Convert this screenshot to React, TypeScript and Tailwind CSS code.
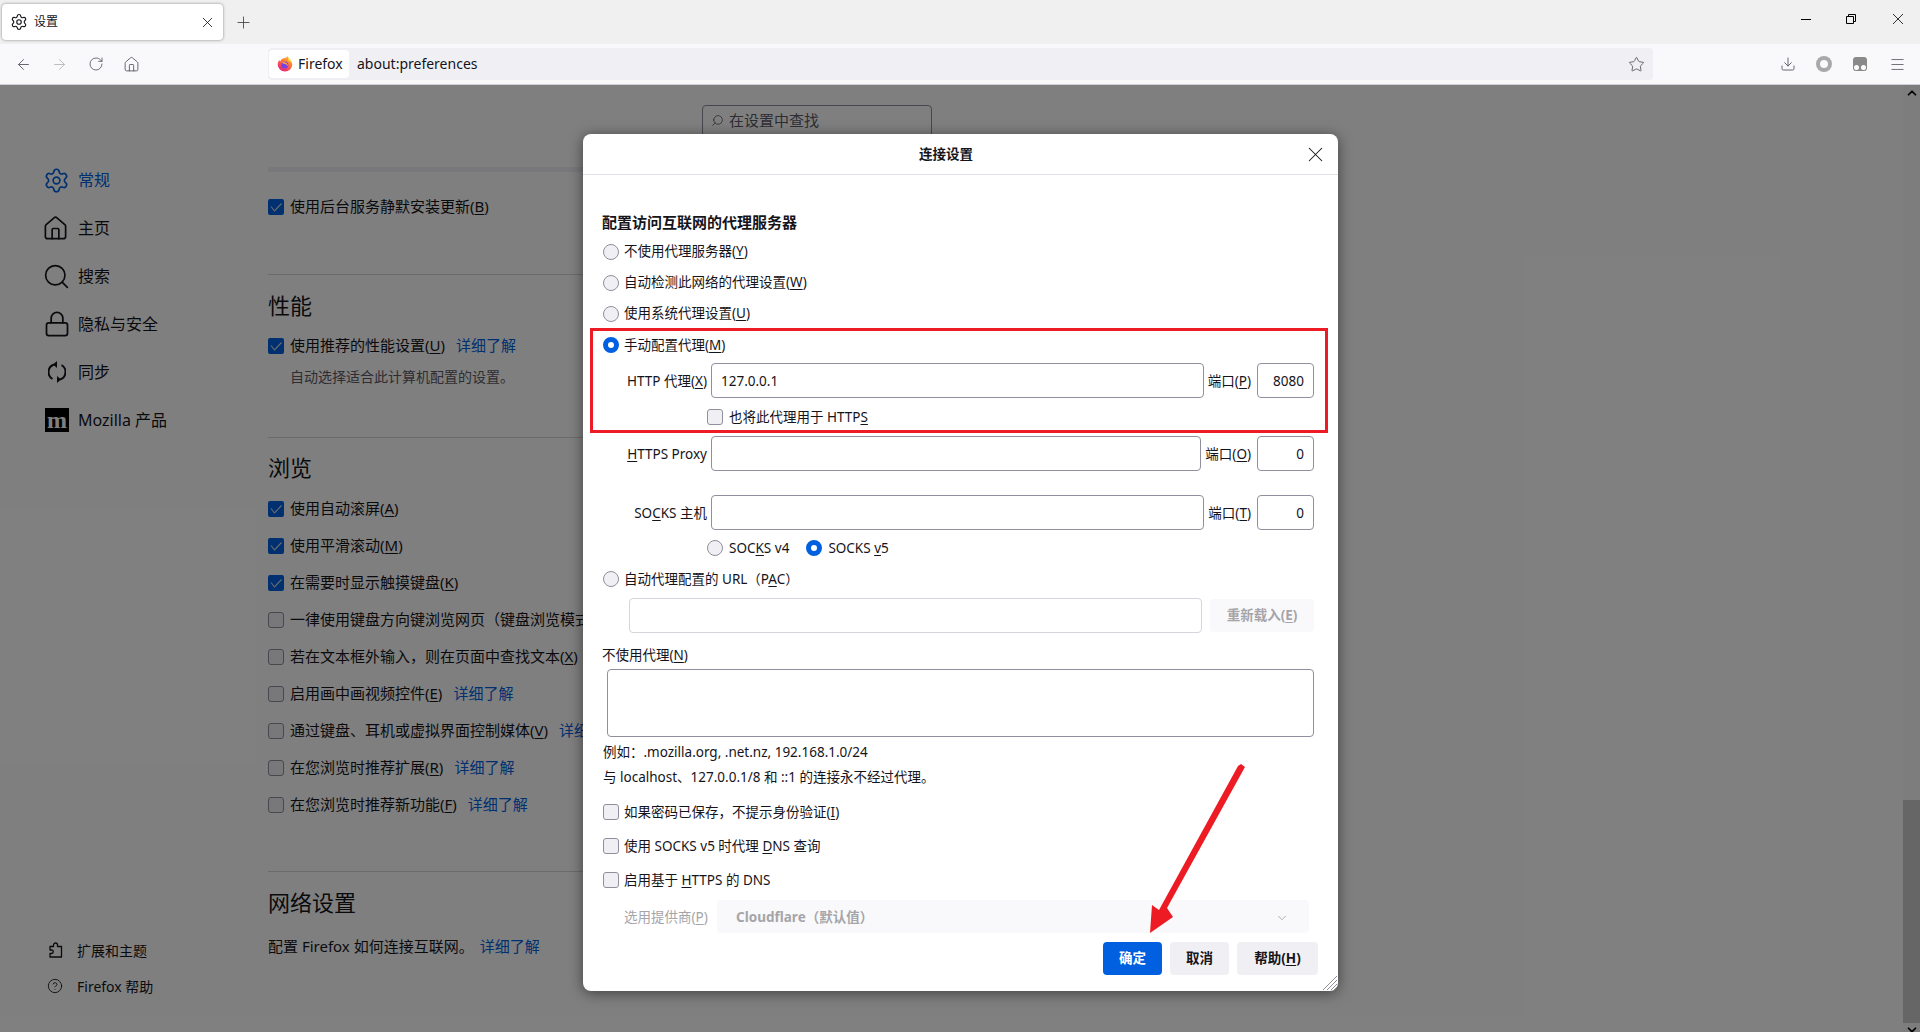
import React from "react";
import { Settings, Search, X, Plus, ArrowLeft, ArrowRight, RotateCw, Star, Download, Menu, ChevronDown, ChevronUp, Lock, CircleHelp, House } from "lucide-react";

const K = ({ children }: { children: React.ReactNode }) => <span className="underline underline-offset-2">{children}</span>;

const Box = ({ on }: { on?: boolean }) =>
  on ? (
    <span className="flex h-4 w-4 shrink-0 items-center justify-center rounded-[2px] bg-[#0060df]">
      <svg viewBox="0 0 16 16" className="h-4 w-4" fill="none" stroke="#d8d8e0" strokeWidth="1.1"><path d="M3 7.5 L6.5 12 L13.5 4.5" /></svg>
    </span>
  ) : (
    <span className="block h-4 w-4 shrink-0 rounded-[3px] border border-[#8f8f9d] bg-[#f0f0f4]" />
  );

const Radio = ({ on }: { on?: boolean }) =>
  on ? (
    <span className="block h-4 w-4 shrink-0 rounded-full border-[5px] border-[#0060df] bg-white" />
  ) : (
    <span className="block h-4 w-4 shrink-0 rounded-full border border-[#8f8f9d] bg-[#f0f0f4]" />
  );

const Link = ({ ml = "ml-[11px]" }: { ml?: string }) => <span className={ml + " text-[#0060df]"}>详细了解</span>;

const PrefRow = ({ on, children }: { on?: boolean; children: React.ReactNode }) => (
  <div className="flex h-[37px] items-center whitespace-nowrap text-[15px]">
    <Box on={on} />
    <span className="ml-[6px]">{children}</span>
  </div>
);

const SideItem = ({ icon, children, active }: { icon: React.ReactNode; children: React.ReactNode; active?: boolean }) => (
  <div className={"flex h-[48px] items-center text-[16px] " + (active ? "text-[#0060df]" : "")}>
    <span className="flex w-[33px] shrink-0 items-center">{icon}</span>
    <span>{children}</span>
  </div>
);

const Input = ({ w, value, right, disabled }: { w: string; value?: string; right?: boolean; disabled?: boolean }) => (
  <div className={`flex ${w} h-[35px] shrink-0 items-center rounded-[4px] border bg-white px-[9px] pt-[2px] ${disabled ? "border-[#d5d5dc]" : "border-[#8f8f9d]"} ${right ? "justify-end" : ""}`}>
    {value}
  </div>
);

const DRadio = ({ on, h, children }: { on?: boolean; h: string; children: React.ReactNode }) => (
  <div className={`flex ${h} items-center`}>
    <Radio on={on} />
    <span className="ml-[5px]">{children}</span>
  </div>
);

const DCheck = ({ children }: { children: React.ReactNode }) => (
  <div className="flex h-[34px] items-center">
    <Box />
    <span className="ml-[5px]">{children}</span>
  </div>
);

const ProxyRow = ({ label, inputW, port, portValue, value, cls = "" }: { label: React.ReactNode; inputW: string; port: React.ReactNode; portValue: string; value?: string; cls?: string }) => (
  <div className={"flex items-center " + cls}>
    <span className="mr-[4px] w-[104px] shrink-0 whitespace-nowrap pt-[2px] text-right">{label}</span>
    <Input w={inputW} value={value} />
    <span className="flex-1 whitespace-nowrap pr-[6px] pt-[2px] text-right">{port}</span>
    <Input w="w-[57px]" value={portValue} right />
  </div>
);

const FirefoxLogo = () => (
  <svg viewBox="0 0 16 16" className="h-4 w-4 shrink-0">
    <defs>
      <linearGradient id="ff" x1="0.8" y1="0" x2="0.2" y2="1">
        <stop offset="0" stopColor="#ffbd2e" />
        <stop offset="0.45" stopColor="#ff7139" />
        <stop offset="1" stopColor="#e31587" />
      </linearGradient>
    </defs>
    <path d="M8 15.5A7.3 7.3 0 0 1 .7 8.4C.7 6.4 1.5 5 2.6 4c0 .8.3 1.3.7 1.5C3.700 3.500 5.500 2.500 7 2.300 8.500 2 10 1.300 10.800.3c.6 1.200.6 2 .3 2.700 1.900 1 4.200 2.900 4.200 5.400A7.300 7.300 0 0 1 8 15.500Z" fill="url(#ff)" />
    <path d="M11 1c1.500 1.500 3 3 4 6-1-1-2.500-2-4-2.500Z" fill="#ffd93b" />
    <circle cx="7.800" cy="9" r="3.500" fill="#7542e5" />
    <path d="M5 6.300c1.600-.6 3.500-.4 4.700.6 1.300 1.100 1.300 2.700.5 3.600.1-1.500-1-2.500-2.500-2.500-1.300 0-2.300-.6-2.700-1.700Z" fill="#ff9a3d" />
  </svg>
);

const SyncIcon = () => (
  <svg viewBox="3 0 18 24" className="ml-[3px] h-[24px] w-[18px]" fill="none" stroke="currentColor" strokeWidth="2">
    <path d="M9 4.500A8 8 0 0 0 7.500 19" />
    <path d="M15 19.500A8 8 0 0 0 16.500 5" />
    <path d="M12 1 L8 4.500 L12 8Z" fill="currentColor" stroke="none" />
    <path d="M12 23 L16 19.500 L12 16Z" fill="currentColor" stroke="none" />
  </svg>
);

const AddonIcon = () => (
  <svg viewBox="0 0 16 16" className="ml-[3px] h-4 w-4" fill="none" stroke="currentColor" strokeWidth="1.3" strokeLinejoin="round">
    <path d="M2 4.500h3.500V3a2 2 0 0 1 4 0v1.500H13.500v10.500H2v-3.500h1.500a1.700 1.700 0 0 0 0-3.500H2Z" />
  </svg>
);

export default function App() {
  return (
    <div className="relative flex h-[1032px] w-[1920px] flex-col overflow-hidden bg-white font-['Noto_Sans','Noto_Sans_CJK_SC',sans-serif] text-[#15141a]">
      {/* Tab strip */}
      <div className="flex h-[44px] shrink-0 items-start bg-[#f0f0f0] pl-[2px] pt-[4px]">
        <div className="flex h-[36px] w-[221px] items-center rounded-[4px] bg-white pl-[8px] pr-[7px] shadow-[0_0_3px_rgba(0,0,0,0.45)]">
          <Settings size={18} strokeWidth={1.500} />
          <span className="ml-[6px] flex-1 text-[12px]">设置</span>
          <X size={17} strokeWidth={1.200} />
        </div>
        <Plus size={19} strokeWidth={1.100} className="ml-[11px] mt-[9px] text-[#444]" />
        <div className="ml-auto flex h-[36px] items-center pr-[17px] text-black">
          <span className="mb-[6px] block h-px w-[10px] bg-black" />
          <svg viewBox="0 0 10 10" className="ml-[35px] mb-[6px] h-[10px] w-[10px]" fill="none" stroke="black"><path d="M.5 2.500h7v7h-7zM2.500 2.500V.5h7v7h-2" /></svg>
          <svg viewBox="0 0 10 10" className="ml-[37px] mb-[6px] h-[10px] w-[10px]" fill="none" stroke="black" strokeWidth="0.8"><path d="M0 0L10 10M10 0L0 10" /></svg>
        </div>
      </div>
      {/* Toolbar */}
      <div className="flex h-[41px] shrink-0 items-center border-b border-[#cfcfd8] bg-[#f9f9fb] text-[#5b5b66]">
        <ArrowLeft size={17} strokeWidth={1.300} className="ml-[15px]" />
        <ArrowRight size={17} strokeWidth={1.300} className="ml-[19px] text-[#b8b8bd]" />
        <RotateCw size={16} strokeWidth={1.300} className="ml-[20px]" />
        <House size={17} strokeWidth={1.300} className="ml-[19px]" />
        <div className="ml-[128px] flex h-[32px] w-[1385px] items-center rounded-[4px] bg-[#f0f0f4] pl-[1px] pr-[8px] text-[#15141a]">
          <div className="flex h-[28px] w-[80px] items-center rounded-[4px] bg-white pl-[8px]">
            <FirefoxLogo />
            <span className="ml-[5px] pb-[2px] text-[14px]">Firefox</span>
          </div>
          <span className="ml-[8px] flex-1 pb-[2px] text-[14px]">about:preferences</span>
          <Star size={17} strokeWidth={1.300} className="text-[#5b5b66]" />
        </div>
        <Download size={16} strokeWidth={1.400} className="ml-[127px]" />
        <span className="ml-[20px] block h-4 w-4 rounded-full border-[4px] border-[#a8a8a8]" />
        <span className="relative ml-[21px] block h-[14px] w-[14px] rounded-[3px] bg-[#8a8a8a]">
          <span className="absolute bottom-[1px] left-[1px] h-[5px] w-[5px] rounded-full bg-white" />
          <span className="absolute bottom-[1px] right-[1px] h-[5px] w-[5px] rounded-full bg-white" />
        </span>
        <Menu size={17} strokeWidth={1.200} className="ml-[22px]" />
      </div>
      {/* Content */}
      <div className="relative flex flex-1">
        <aside className="flex w-[268px] shrink-0 flex-col justify-between pb-[28px] pl-[45px] pt-[71px]">
          <div>
            <SideItem active icon={<Settings size={27} strokeWidth={1.500} className="-ml-[2px]" />}>常规</SideItem>
            <SideItem icon={<House size={27} strokeWidth={1.500} className="-ml-[3px]" />}>主页</SideItem>
            <SideItem icon={<Search size={29} strokeWidth={1.400} className="-ml-[3px]" />}>搜索</SideItem>
            <SideItem icon={<Lock size={28} strokeWidth={1.500} className="-ml-[2px]" />}>隐私与安全</SideItem>
            <SideItem icon={<SyncIcon />}>同步</SideItem>
            <SideItem icon={<span className="flex h-[24px] w-[24px] items-center justify-center bg-black font-['Liberation_Serif',serif] text-[24px] font-bold leading-none text-white">m</span>}>Mozilla 产品</SideItem>
          </div>
          <div className="text-[14px]">
            <div className="flex h-[36px] items-center"><span className="w-[32px] shrink-0"><AddonIcon /></span><span>扩展和主题</span></div>
            <div className="flex h-[36px] items-center"><span className="w-[32px] shrink-0"><CircleHelp size={16} strokeWidth={1.300} className="ml-[2px]" /></span><span>Firefox 帮助</span></div>
          </div>
        </aside>
        <main className="w-[664px] shrink-0 pt-[20px]">
          <div className="ml-auto flex h-[32px] w-[230px] items-center rounded-[4px] border border-[#8f8f9d] pb-[2px] pl-[8px] text-[15px] text-[#5b5b66]">
            <Search size={13} strokeWidth={1.500} className="-scale-x-100" />
            <span className="ml-[5px]">在设置中查找</span>
          </div>
          <div className="mt-[30px] h-[5px] rounded-[2px] bg-[#f0f0f4]" />
          <div className="mt-[16px]"><PrefRow on>使用后台服务静默安装更新(<K>B</K>)</PrefRow></div>
          <div className="mt-[49px] h-px bg-[#d7d7db]" />
          <h2 className="mt-[11px] flex h-[40px] items-center pb-[2px] text-[22px] font-normal">性能</h2>
          <div className="mt-px"><PrefRow on>使用推荐的性能设置(<K>U</K>)<Link /></PrefRow></div>
          <p className="flex h-[24px] items-center pl-[22px] text-[14px] text-[#5b5b66]">自动选择适合此计算机配置的设置。</p>
          <div className="mt-[49px] h-px bg-[#d7d7db]" />
          <h2 className="mt-[10px] flex h-[40px] items-center pb-[2px] text-[22px] font-normal">浏览</h2>
          <div className="mt-[2px]">
            <PrefRow on>使用自动滚屏(<K>A</K>)</PrefRow>
            <PrefRow on>使用平滑滚动(<K>M</K>)</PrefRow>
            <PrefRow on>在需要时显示触摸键盘(<K>K</K>)</PrefRow>
            <PrefRow>一律使用键盘方向键浏览网页（键盘浏览模式）(<K>C</K>)</PrefRow>
            <PrefRow>若在文本框外输入，则在页面中查找文本(<K>X</K>)</PrefRow>
            <PrefRow>启用画中画视频控件(<K>E</K>)<Link /></PrefRow>
            <PrefRow>通过键盘、耳机或虚拟界面控制媒体(<K>V</K>)<Link /></PrefRow>
            <PrefRow>在您浏览时推荐扩展(<K>R</K>)<Link /></PrefRow>
            <PrefRow>在您浏览时推荐新功能(<K>F</K>)<Link /></PrefRow>
          </div>
          <div className="mt-[48px] h-px bg-[#d7d7db]" />
          <h2 className="mt-[11px] flex h-[40px] items-center pb-[2px] text-[22px] font-normal">网络设置</h2>
          <p className="mt-[5px] flex h-[37px] items-center text-[15px]">配置 Firefox 如何连接互联网。<Link ml="ml-[6px]" /></p>
        </main>
        <div className="ml-auto flex w-[17px] shrink-0 flex-col bg-[#fafafa] text-black">
          <ChevronUp size={14} strokeWidth={3} className="ml-[2px] mt-[1px]" />
          <div className="mt-auto h-[223px] bg-[#cdcdcd]" />
          <div className="h-[9px] overflow-hidden"><ChevronDown size={14} strokeWidth={3} className="ml-[2px]" /></div>
        </div>
        <div className="absolute inset-0 bg-black/50" />
      </div>
      {/* Dialog */}
      <div className="absolute left-[583px] top-[134px] h-[857px] w-[755px] rounded-[8px] bg-white text-[13.500px] shadow-[0_2px_14px_rgba(0,0,0,0.5)]">
        <div className="relative flex h-[41px] items-center justify-center border-b border-[#e0e0e6] pr-[29px] font-bold">
          连接设置
          <X size={25} strokeWidth={1.000} className="absolute right-[10px] top-[8px]" />
        </div>
        <div className="ml-[20px] w-[711px]">
          <h3 className="-ml-px mt-[35px] flex h-[24px] items-center text-[15px] font-bold">配置访问互联网的代理服务器</h3>
          <div className="mt-[2px]">
            <DRadio h="h-[31px]">不使用代理服务器(<K>Y</K>)</DRadio>
            <DRadio h="h-[31px]">自动检测此网络的代理设置(<K>W</K>)</DRadio>
            <DRadio h="h-[31px]">使用系统代理设置(<K>U</K>)</DRadio>
            <DRadio h="h-[32px]" on>手动配置代理(<K>M</K>)</DRadio>
          </div>
          <ProxyRow cls="mt-[2px]" label={<>HTTP 代理(<K>X</K>)</>} inputW="w-[493px]" value="127.0.0.1" port={<>端口(<K>P</K>)</>} portValue="8080" />
          <div className="flex h-[38px] items-center pl-[104px]">
            <Box />
            <span className="ml-[6px]">也将此代理用于 HTTP<K>S</K></span>
          </div>
          <ProxyRow label={<><K>H</K>TTPS Proxy</>} inputW="w-[490px]" port={<>端口(<K>O</K>)</>} portValue="0" />
          <ProxyRow cls="mt-[24px]" label={<>SO<K>C</K>KS 主机</>} inputW="w-[493px]" port={<>端口(<K>T</K>)</>} portValue="0" />
          <div className="flex h-[36px] items-center pl-[104px]">
            <Radio />
            <span className="ml-[6px]">SOC<K>K</K>S v4</span>
            <span className="ml-[17px]"><Radio on /></span>
            <span className="ml-[6px]">SOCKS <K>v</K>5</span>
          </div>
          <DRadio h="h-[26px]">自动代理配置的 URL（P<K>A</K>C）</DRadio>
          <div className="mt-[6px] flex items-center pl-[26px]">
            <Input w="w-[573px]" disabled />
            <button className="ml-[8px] flex h-[33px] w-[104px] items-center justify-center rounded-[4px] bg-[#f9f9fb] font-bold text-[#a5a5a9]">重新载入(<K>E</K>)</button>
          </div>
          <div className="-ml-px mt-[11px] flex h-[22px] items-center">不使用代理(<K>N</K>)</div>
          <div className="ml-[4px] mt-[3px] h-[68px] rounded-[4px] border border-[#8f8f9d] bg-white" />
          <p className="mt-[3px] flex h-[24px] items-center">例如：.mozilla.org, .net.nz, 192.168.1.0/24</p>
          <p className="flex h-[26px] items-center">与 localhost、127.0.0.1/8 和 ::1 的连接永不经过代理。</p>
          <div className="mt-[5px]">
            <DCheck>如果密码已保存，不提示身份验证(<K>I</K>)</DCheck>
            <DCheck>使用 SOCKS v5 时代理 <K>D</K>NS 查询</DCheck>
            <DCheck>启用基于 <K>H</K>TTPS 的 DNS</DCheck>
          </div>
          <div className="mt-[3px] flex items-center pl-[21px] text-[#a5a5a9]">
            <span className="w-[93px] shrink-0 whitespace-nowrap pt-[2px]">选用提供商(<K>P</K>)</span>
            <div className="flex h-[33px] w-[592px] items-center rounded-[4px] bg-[#f9f9fb] pl-[19px] pr-[20px] pt-[2px] font-bold">
              <span className="flex-1">Cloudflare（默认值）</span>
              <ChevronDown size={14} strokeWidth={1.500} />
            </div>
          </div>
          <div className="-mr-[4px] mt-[9px] flex justify-end gap-[8px] font-bold">
            <button className="h-[33px] w-[59px] rounded-[4px] bg-[#0060df] text-white">确定</button>
            <button className="h-[33px] w-[59px] rounded-[4px] bg-[#f0f0f4]">取消</button>
            <button className="h-[33px] w-[81px] rounded-[4px] bg-[#f0f0f4]">帮助(<K>H</K>)</button>
          </div>
        </div>
        <svg viewBox="0 0 14 14" className="absolute bottom-[1px] right-[1px] h-[14px] w-[14px]" stroke="#8f8f9d" strokeWidth="1"><path d="M0 14L14 0M4 14L14 4M8 14L14 8M11 14L14 11" /></svg>
        <div className="pointer-events-none absolute left-[7px] top-[194px] h-[105px] w-[738px] border-[3px] border-[#ed1c24]" />
      </div>
      {/* Annotation arrow */}
      <svg viewBox="1140 760 110 180" className="pointer-events-none absolute left-[1140px] top-[760px] h-[180px] w-[110px]">
        <polygon points="1238,766 1241,764 1245,767 1167,908 1173,917 1150,933 1152,905 1159,910" fill="#ed1c24" />
      </svg>
    </div>
  );
}
